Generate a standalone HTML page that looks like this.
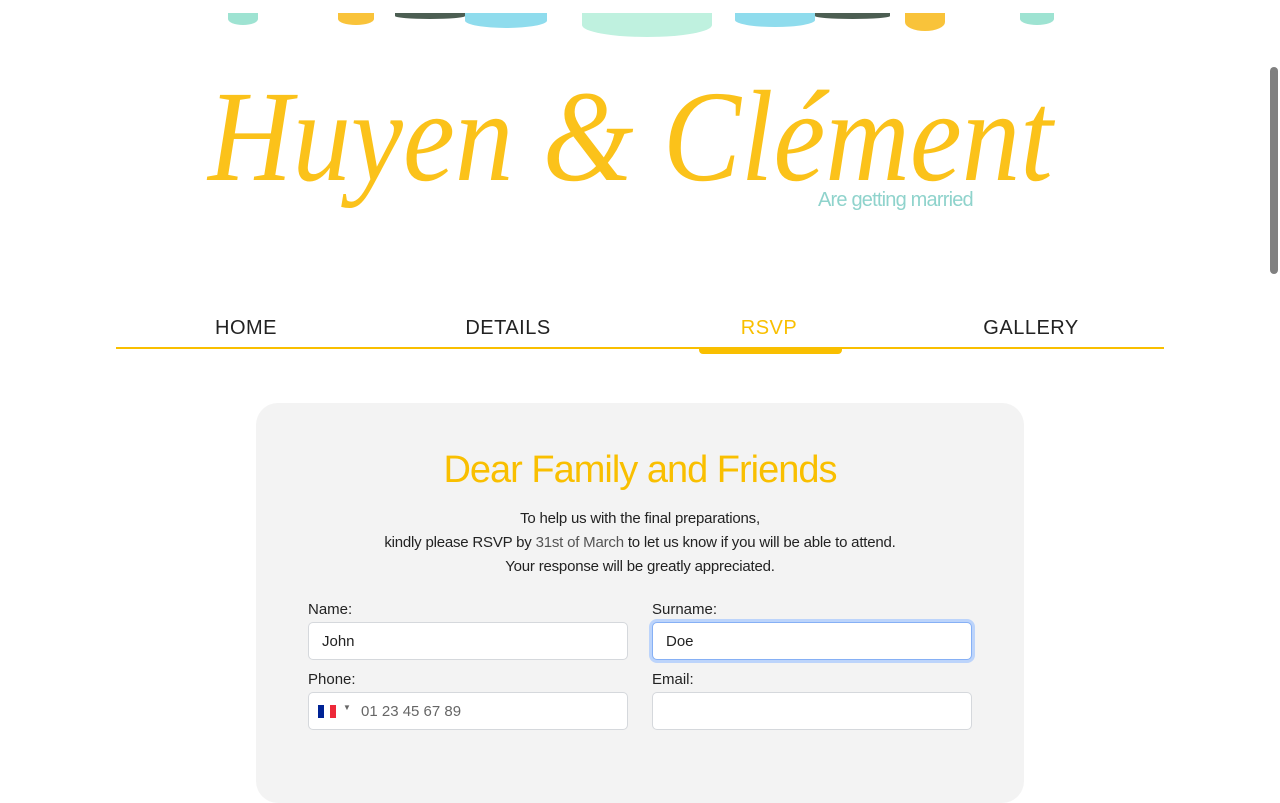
<!DOCTYPE html>
<html><head><meta charset="utf-8"><style>
html,body{margin:0;padding:0;width:1280px;height:720px;overflow:hidden;background:#fff;font-family:"Liberation Sans",sans-serif;}
.abs{position:absolute}
.blob{position:absolute;border-radius:0 0 50% 50%;}
.title{position:absolute;left:208px;top:62px;font-family:"Liberation Serif",serif;font-style:italic;font-size:130px;color:#fbc21a;font-weight:normal;letter-spacing:0;white-space:nowrap;line-height:150px;transform:scaleX(0.9);transform-origin:0 0;}
.sub{position:absolute;left:818px;top:189px;font-size:20px;color:#8fd3cc;font-family:"Liberation Sans",sans-serif;letter-spacing:-0.8px}
.nav{position:absolute;top:317px;font-size:20px;color:#222;letter-spacing:0.5px;text-align:center;width:200px}
.card{position:absolute;left:256px;top:403px;width:768px;height:400px;background:#f3f3f3;border-radius:22px}
.h{position:absolute;left:0;width:768px;top:46px;text-align:center;font-size:38px;color:#f9bf00;letter-spacing:-1px}
.p{position:absolute;left:0;width:768px;top:104px;text-align:center;font-size:15px;color:#222;line-height:24px;letter-spacing:-0.2px}
.lab{position:absolute;font-size:15px;color:#222}
.inp{position:absolute;width:320px;height:38px;background:#fff;border:1px solid #d5d8dc;border-radius:5px;box-sizing:border-box;font-size:15px;color:#222;padding:10px 13px}
</style></head><body>
<div class="blob" style="left:228px;top:13px;width:30px;height:12px;background:#9ee3d2"></div>
<div class="blob" style="left:338px;top:13px;width:36px;height:12px;background:#f9c33a"></div>
<div class="blob" style="left:395px;top:13px;width:70px;height:6px;background:#4c5e52"></div>
<div class="blob" style="left:465px;top:13px;width:82px;height:15px;background:#8fdced"></div>
<div class="blob" style="left:582px;top:13px;width:130px;height:24px;background:#bff1df"></div>
<div class="blob" style="left:735px;top:13px;width:80px;height:14px;background:#8fdced"></div>
<div class="blob" style="left:815px;top:13px;width:75px;height:6px;background:#4c5e52"></div>
<div class="blob" style="left:905px;top:13px;width:40px;height:18px;background:#f9c33a"></div>
<div class="blob" style="left:1020px;top:13px;width:34px;height:12px;background:#9ee3d2"></div>

<div class="title">Huyen &amp; Clément</div>
<div class="sub">Are getting married</div>

<div class="nav" style="left:146px">HOME</div>
<div class="nav" style="left:408px">DETAILS</div>
<div class="nav" style="left:669px;color:#f9bf00">RSVP</div>
<div class="nav" style="left:931px">GALLERY</div>
<div class="abs" style="left:116px;top:347px;width:1048px;height:2px;background:#f9bf00"></div>
<div class="abs" style="left:699px;top:347px;width:143px;height:7px;background:#f9bf00;border-radius:0 0 4px 4px"></div>

<div class="card">
<div class="h">Dear Family and Friends</div>
<div class="p">To help us with the final preparations,<br>kindly please RSVP by <span style="color:#555">31st of March</span> to let us know if you will be able to attend.<br>Your response will be greatly appreciated.</div>
<div class="lab" style="left:52px;top:198px">Name:</div>
<div class="lab" style="left:396px;top:198px">Surname:</div>
<div class="inp" style="left:52px;top:219px">John</div>
<div class="inp" style="left:396px;top:219px;border:1px solid #86b0f5;box-shadow:0 0 0 3px #bcd4fb">Doe</div>
<div class="lab" style="left:52px;top:268px">Phone:</div>
<div class="lab" style="left:396px;top:268px">Email:</div>
<div class="inp" style="left:52px;top:289px;color:#666;padding-left:52px">01 23 45 67 89
<div class="abs" style="left:9px;top:12px;width:6px;height:13px;background:#002395"></div>
<div class="abs" style="left:15px;top:12px;width:6px;height:13px;background:#fff"></div>
<div class="abs" style="left:21px;top:12px;width:6px;height:13px;background:#ed2939"></div>
<div class="abs" style="left:34px;top:10px;font-size:8px;color:#666">▼</div>
</div>
<div class="inp" style="left:396px;top:289px"></div>
</div>

<div class="abs" style="left:1270px;top:67px;width:8px;height:207px;background:#808080;border-radius:4px"></div>
</body></html>
